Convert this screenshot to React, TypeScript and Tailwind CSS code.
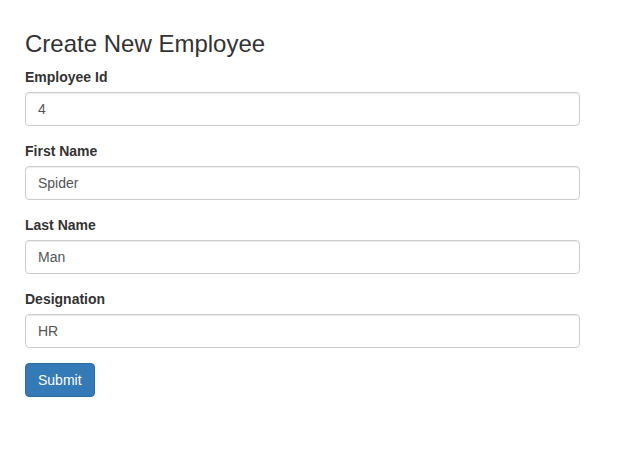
import React from "react";

const fields = [
  { label: "Employee Id", value: "4" },
  { label: "First Name", value: "Spider" },
  { label: "Last Name", value: "Man" },
  { label: "Designation", value: "HR" },
];

export default function App() {
  return (
    <div
      className="min-h-[459px] bg-white text-[#333] text-[14px] leading-[20px]"
      style={{ fontFamily: '"Liberation Sans", Arial, sans-serif' }}
    >
      <div className="pl-[25px] pt-[31px] w-[580px]">
        <h3 className="text-[24px] leading-[26.4px] font-normal mb-[10px] text-[#333]">
          Create New Employee
        </h3>
        <form onSubmit={(e) => e.preventDefault()}>
          {fields.map((f) => (
            <div key={f.label} className="mb-[15px]">
              <label className="inline-block font-bold mb-[5px] text-[14px] leading-[20px]">
                {f.label}
              </label>
              <input
                type="text"
                defaultValue={f.value}
                className="block w-full h-[34px] px-[12px] py-[6px] text-[14px] leading-[20px] text-[#555] bg-white border border-[#ccc] rounded-[4px] shadow-[inset_0_1px_1px_rgba(0,0,0,0.075)] outline-none"
              />
            </div>
          ))}
          <button
            type="submit"
            className="h-[34px] px-[12px] py-[6px] text-[14px] leading-[20px] text-white bg-[#337ab7] border border-[#2e6da4] rounded-[4px]"
          >
            Submit
          </button>
        </form>
      </div>
    </div>
  );
}
